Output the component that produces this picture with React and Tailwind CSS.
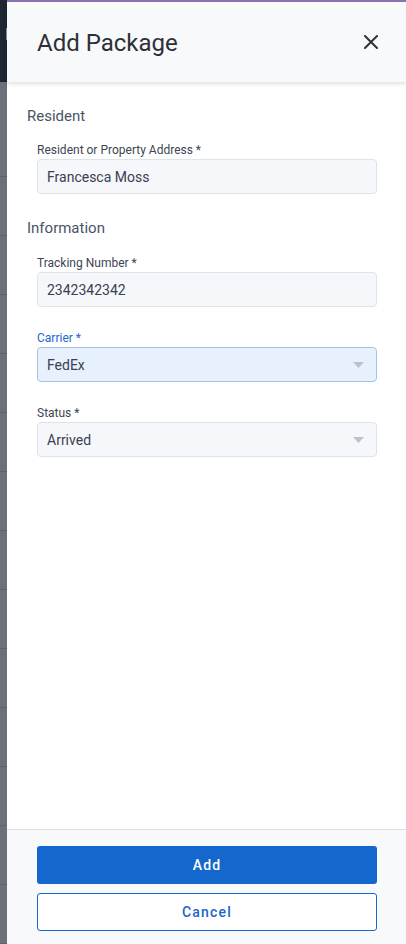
import React from 'react';

const font = { fontFamily: 'Roboto, "Liberation Sans", sans-serif' };

function Caret() {
  return (
    <svg width="11" height="6" viewBox="0 0 11 6" className="shrink-0">
      <path d="M0 0 L11 0 L5.5 6 Z" fill="#bcc2cc" />
    </svg>
  );
}

function Field({ label, value, select, active }) {
  return (
    <div className="flex flex-col">
      <label
        className={`text-[12px] leading-[16px] mb-[1px] ${active ? 'text-[#1b66cf]' : 'text-[#3d4555]'}`}
      >
        {label} *
      </label>
      <div
        className={`h-[35px] rounded-[4px] border flex items-center justify-between pl-[9px] pr-[12px] ${
          active ? 'bg-[#e7f1fd] border-[#a3c1e4]' : 'bg-[#f5f7fa] border-[#dfe3ea]'
        }`}
      >
        <span className="text-[14px] leading-[20px] text-[#394150]">{value}</span>
        {select && <Caret />}
      </div>
    </div>
  );
}

export default function App() {
  const rows = Array.from({ length: 13 });

  return (
    <div className="w-[406px] h-[944px] flex overflow-hidden bg-white" style={font}>
      {/* dimmed app behind the drawer */}
      <div className="w-[7px] shrink-0 flex flex-col bg-[#6b7079]">
        <div className="h-[83px] bg-[#1e2533] relative">
          <div className="absolute left-[6px] top-[28px] w-[1px] h-[12px] bg-[#8a909a]" />
        </div>
        <div className="h-[97px] border-b border-[#5d626b]" />
        {rows.map((_, i) => (
          <div key={i} className="h-[59px] shrink-0 border-b border-[#5d626b]" />
        ))}
      </div>

      {/* drawer */}
      <div className="flex-1 flex flex-col min-w-0">
        <div className="h-[2px] bg-[#8e72b8]" />
        <div className="h-[80px] shrink-0 bg-[#f8f9fb] flex items-center justify-between pl-[30px] pr-[28px] shadow-[0_2px_4px_rgba(0,0,0,0.12)] relative z-10">
          <h1 className="text-[24px] leading-[30px] text-[#2d3038] pt-[2px]">Add Package</h1>
          <svg width="14" height="14" viewBox="0 0 14 14">
            <path d="M1 1 L13 13 M13 1 L1 13" stroke="#333" strokeWidth="2" strokeLinecap="square" />
          </svg>
        </div>

        {/* form */}
        <div className="flex-1 flex flex-col pt-[24px] pl-[20px] pr-[29px]">
          <h2 className="text-[15px] leading-[20px] text-[#4a5466]">Resident</h2>
          <div className="pl-[10px] mt-[16px]">
            <Field label="Resident or Property Address" value="Francesca Moss" />
          </div>

          <h2 className="text-[15px] leading-[20px] text-[#4a5466] mt-[24px]">Information</h2>
          <div className="pl-[10px] mt-[17px] flex flex-col gap-[23px]">
            <Field label="Tracking Number" value="2342342342" />
            <Field label="Carrier" value="FedEx" select active />
            <Field label="Status" value="Arrived" select />
          </div>
        </div>

        {/* footer */}
        <div className="h-[115px] shrink-0 border-t border-[#dde1e7] bg-[#f8f9fb] pt-[16px] pl-[30px] pr-[29px] flex flex-col gap-[9px]">
          <button className="h-[38px] rounded-[3px] bg-[#1467cc] text-white text-[14px] font-medium tracking-[1.2px]">
            Add
          </button>
          <button className="h-[38px] rounded-[3px] border border-[#1a66cc] bg-white text-[#1a66cc] text-[14px] font-medium tracking-[1.2px]">
            Cancel
          </button>
        </div>
      </div>
    </div>
  );
}
